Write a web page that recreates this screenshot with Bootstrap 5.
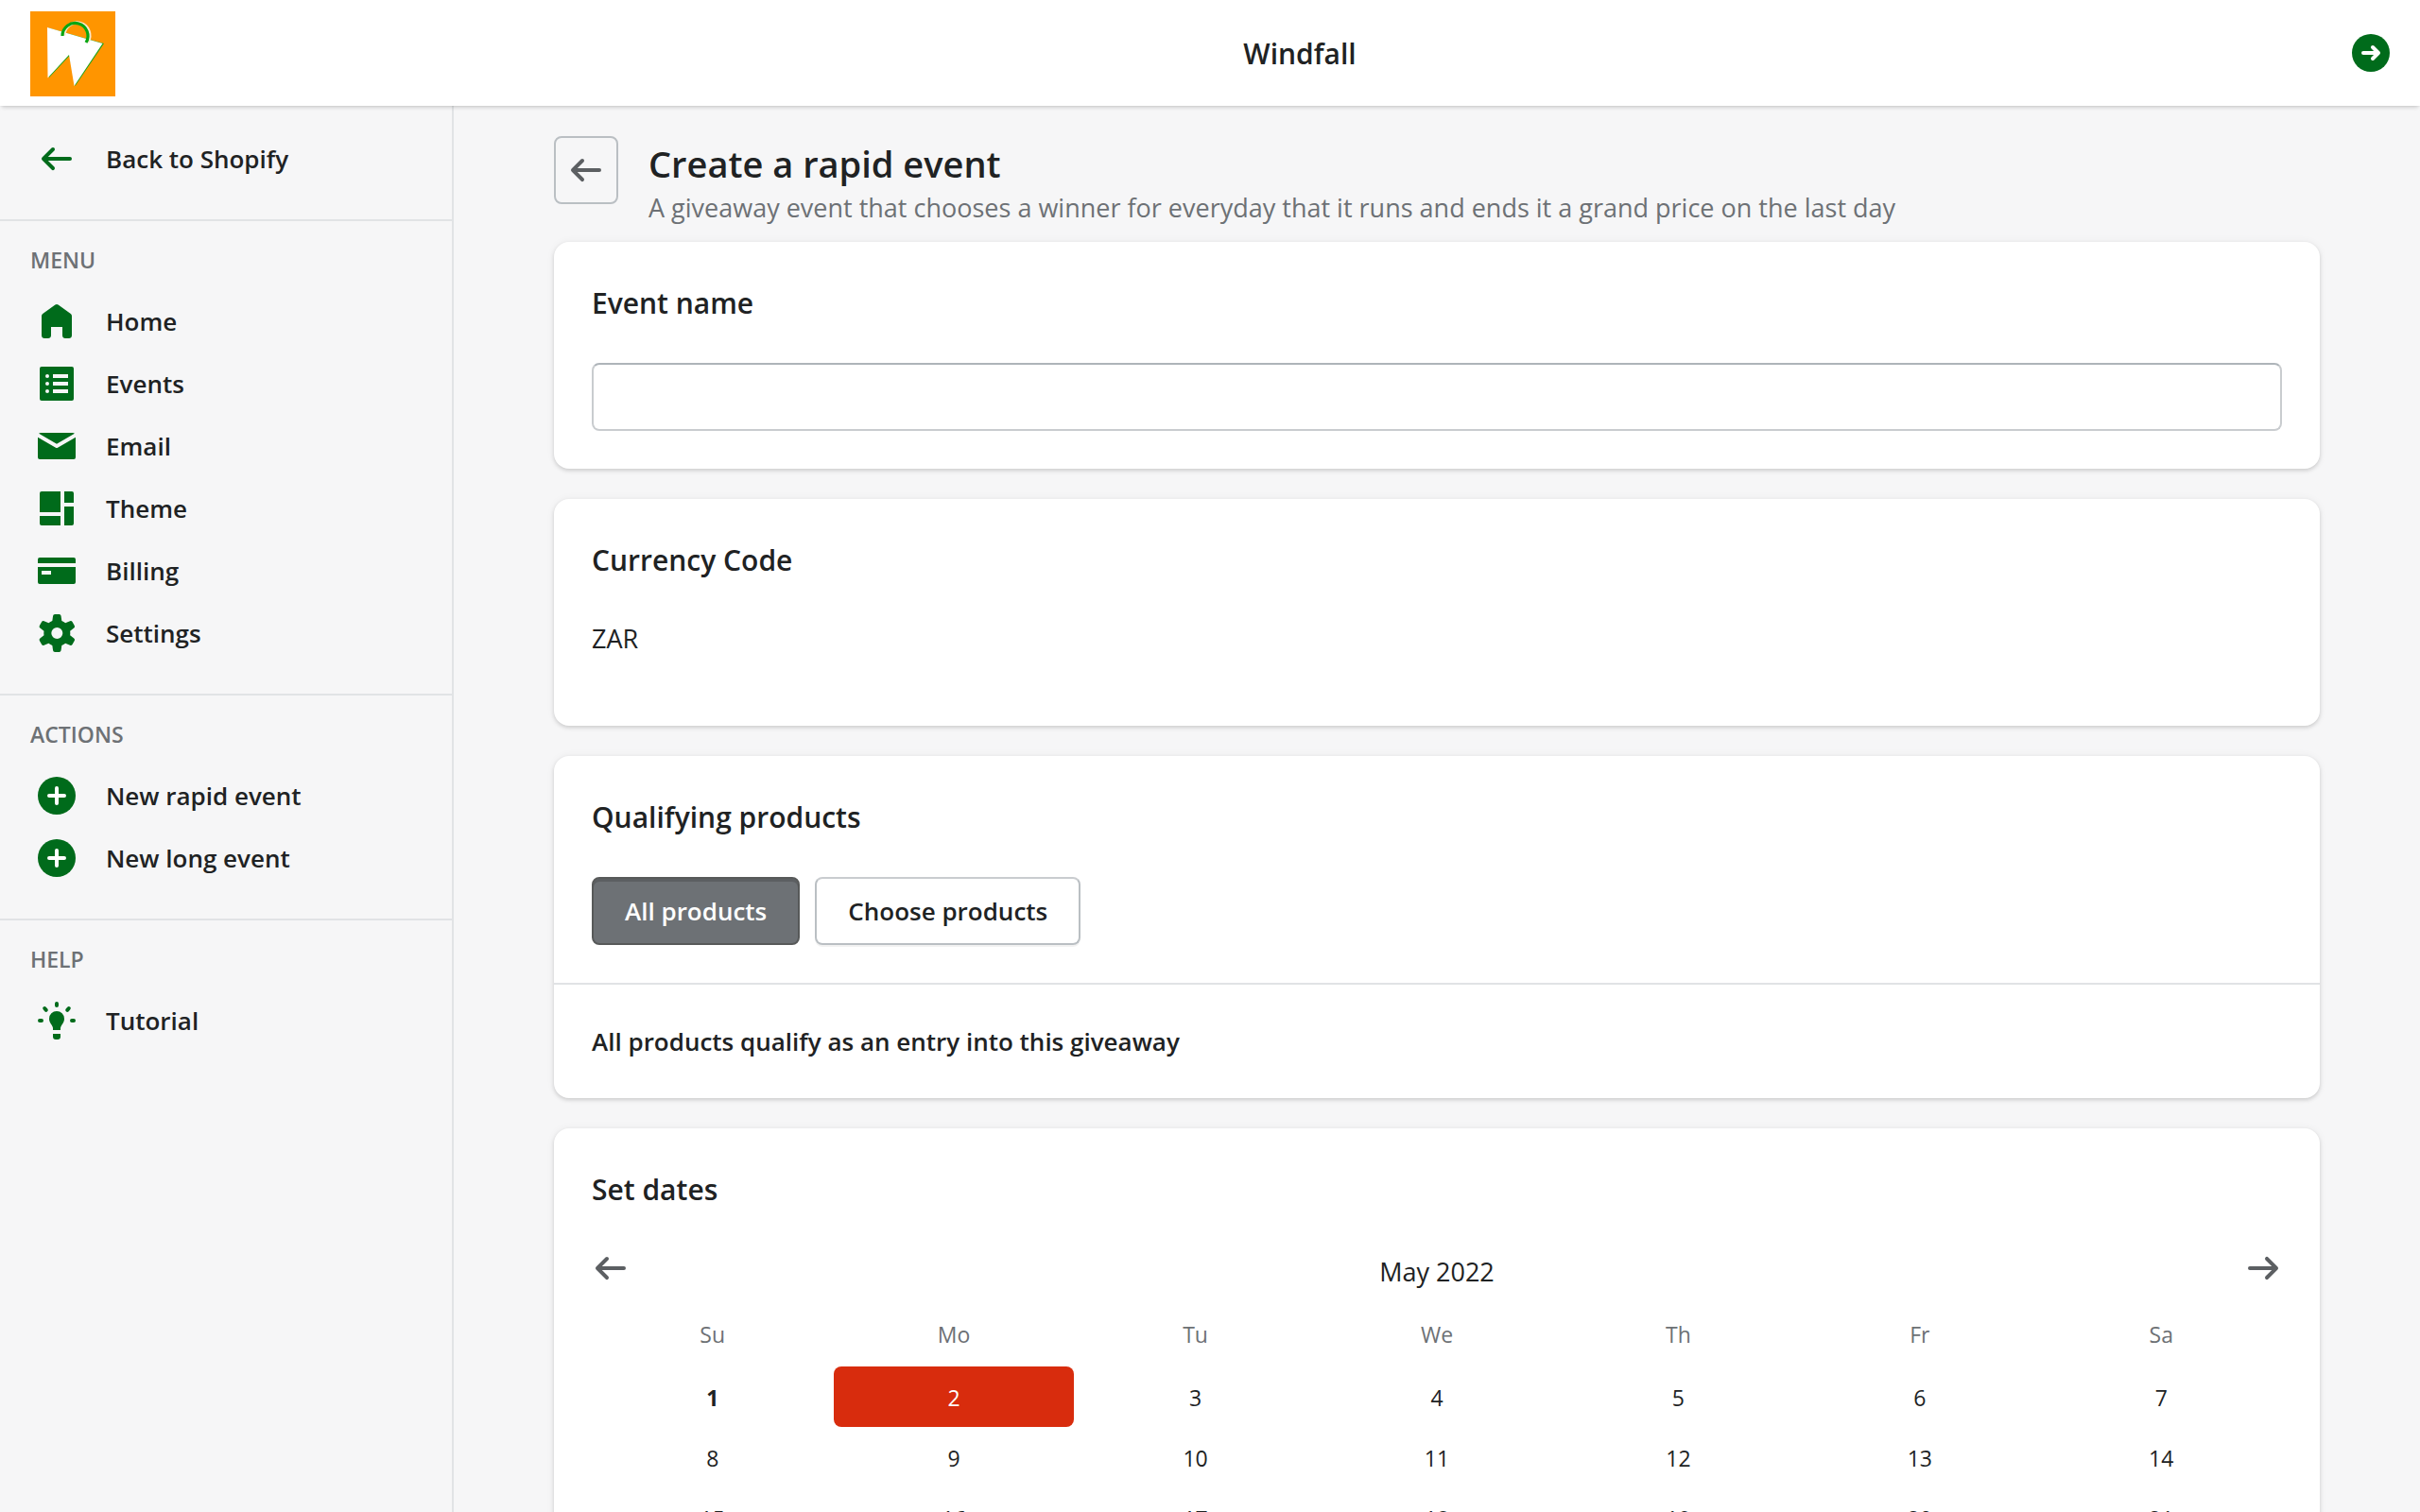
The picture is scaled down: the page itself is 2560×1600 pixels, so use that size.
<!DOCTYPE html>
<html lang="en">
<head>
<meta charset="utf-8">
<meta name="viewport" content="width=device-width, initial-scale=1">
<title>Windfall</title>
<link href="https://cdn.jsdelivr.net/npm/bootstrap@5.3.0/dist/css/bootstrap.min.css" rel="stylesheet">
<style>
:root{--ink:#202223;--subdued:#6d7175;--brand:#006b1b;--line:#e1e3e5;--icon:#5c5f62;--surface:#f6f6f7}
body{font-family:"Open Sans","Noto Sans",sans-serif;font-size:27px;line-height:40px;color:var(--ink);background:var(--surface)}
.ico{width:40px;height:40px;flex:none;display:block;fill:currentColor}
.stroked{fill:none;stroke:currentColor;stroke-width:2;stroke-linecap:round}
.topbar{height:112px;padding:0 32px;flex:none;box-shadow:0 4px 4px -2px rgba(0,0,0,.15),0 0 2px rgba(0,0,0,.1);z-index:2}
.topbar-logo{width:230px;padding-top:2px}
.topbar-logo svg{display:block;width:90px;height:90px}
.brand-name{font-size:30px;padding-top:2px}
.text-brand{color:var(--brand)}
.sidebar{width:480px;flex:none;border-right:2px solid var(--line)}
.side-section{padding-bottom:31px;border-bottom:2px solid var(--line)}
.side-section:first-child{padding-top:23px}
.side-section:last-child{border-bottom:0}
.side-title{font-size:23px;line-height:40px;color:var(--subdued);padding:21px 32px 12px;margin:0;font-weight:600}
.side-link{height:66px;padding:0 40px;gap:32px;color:var(--ink);font-size:26px;font-weight:600}
.side-link .ico{color:var(--brand)}
.side-link:hover{background:#edeeef}
.page-main{padding:32px 64px;scrollbar-width:none}
.page-main::-webkit-scrollbar{display:none}
.page-col{max-width:1868px}
.page-head{gap:32px;margin-bottom:16px}
.back-btn{width:68px;height:72px;border:2px solid #babfc3;border-radius:8px;color:var(--icon)}
.page-title{font-size:38px;line-height:54px;padding-top:2px}
.subdued{color:var(--subdued)}
.panel{border:0;border-radius:16px;margin-bottom:32px;box-shadow:0 0 10px rgba(23,24,24,.05),0 2px 4px rgba(0,0,0,.15)}
.panel-part{padding:40px}
.panel-part + .panel-part{border-top:2px solid var(--line)}
.panel-title{font-size:30px;line-height:50px;margin:0 0 38px;font-weight:600;display:block}
.panel-note{font-size:26px;font-weight:600}
.text-box{height:72px;border:2px solid #c9cccf;border-top-color:#aeb4b9;border-radius:8px;font-size:27px}
.currency{min-height:72px}
.choice{height:72px;border:2px solid #babfc3;border-radius:8px;font-size:26px;font-weight:600;padding:0 33px;color:var(--ink);background:#fff;border-top-color:#c9cccf;box-shadow:0 2px 0 rgba(0,0,0,.05)}
.choice.picked{background:#6d7175;border-color:#575959;color:#fff;box-shadow:inset 0 3px 0 #5c5f62}
.icon-btn{color:var(--icon)}
.calendar{table-layout:fixed;margin-top:12px;font-size:23px}
.calendar th{height:68px;padding:0;font-weight:400;color:var(--subdued)}
.calendar td{padding:0 1px}
.day{height:64px;padding:2px 0 0;border-radius:8px;color:var(--ink)}
.day.today{font-weight:700}
.day.chosen{background:#d82c0d;color:#fff}
</style>
</head>
<body class="vh-100 d-flex flex-column overflow-hidden">
<header class="topbar bg-white d-flex align-items-center position-relative">
  <a class="topbar-logo" href="#" aria-label="Windfall home">
    <svg viewBox="0 0 90 90" aria-hidden="true">
      <rect width="90" height="90" fill="#ff9500"/>
      <path d="M19 17.500l59 16.500-30.500 45-6-32-21.500 23z" fill="#1da31a"/>
      <path d="M18 17l58.500 17L46.500 79 41 46 18.500 70.500z" fill="#fff"/>
      <path d="M36 25.500A13.500 13.500 0 1 1 61 32.500" fill="none" stroke="#fde8cc" stroke-width="3"/>
      <path d="M34 26A13.500 13.500 0 1 1 59 33" fill="none" stroke="#08a612" stroke-width="3.200"/>
    </svg>
  </a>
  <div class="brand-name flex-fill text-center fw-semibold">Windfall</div>
  <button type="button" class="btn p-0 border-0 text-brand" aria-label="Log out">
    <svg class="ico" viewBox="0 0 20 20"><circle cx="10" cy="10" r="10"/><path d="M6 10h8M11 7l3 3-3 3" fill="none" stroke="#fff" stroke-width="2" stroke-linecap="round" stroke-linejoin="round"/></svg>
  </button>
</header>
<div class="d-flex flex-fill overflow-hidden">
  <nav class="sidebar" aria-label="Main">
    <div class="side-section">
      <a class="side-link d-flex align-items-center text-decoration-none" href="#"><svg class="ico" viewBox="0 0 20 20"><path d="M17 9H5.414l3.293-3.293a.999.999 0 1 0-1.414-1.414l-5 5a.999.999 0 0 0 0 1.414l5 5a.997.997 0 0 0 1.414 0 .999.999 0 0 0 0-1.414L5.414 11H17a1 1 0 1 0 0-2z"/></svg>Back to Shopify</a>
    </div>
    <div class="side-section">
      <h2 class="side-title">MENU</h2>
      <a class="side-link d-flex align-items-center text-decoration-none" href="#"><svg class="ico" viewBox="0 0 20 20"><path d="M18 7.261V17.500c0 .841-.672 1.500-1.500 1.500h-2c-.828 0-1.500-.659-1.500-1.500V13H7v4.477C7 18.318 6.328 19 5.500 19h-2c-.828 0-1.500-.682-1.500-1.523V7.261a1.500 1.500 0 0 1 .615-1.210l6.590-4.820a1.481 1.481 0 0 1 1.590 0l6.590 4.820A1.500 1.500 0 0 1 18 7.260z"/></svg>Home</a>
      <a class="side-link d-flex align-items-center text-decoration-none" href="#"><svg class="ico" viewBox="0 0 20 20"><path fill-rule="evenodd" d="M2 1h16a1 1 0 0 1 1 1v16a1 1 0 0 1-1 1H2a1 1 0 0 1-1-1V2a1 1 0 0 1 1-1zm6 4v2h8V5zm0 4v2h8V9zm0 4v2h8v-2zM5 5a1 1 0 1 0 0 2 1 1 0 0 0 0-2zm0 4a1 1 0 1 0 0 2 1 1 0 0 0 0-2zm0 4a1 1 0 1 0 0 2 1 1 0 0 0 0-2z"/></svg>Events</a>
      <a class="side-link d-flex align-items-center text-decoration-none" href="#"><svg class="ico" viewBox="0 0 20 20"><path d="M0 5.324V16a1 1 0 0 0 1 1h18a1 1 0 0 0 1-1V5.324l-9.496 5.540a1 1 0 0 1-1.008 0L0 5.324z"/><path d="M19.443 3.334A1.494 1.494 0 0 0 18.500 3h-17a1.490 1.490 0 0 0-.943.334L10 8.842l9.443-5.508z"/></svg>Email</a>
      <a class="side-link d-flex align-items-center text-decoration-none" href="#"><svg class="ico" viewBox="0 0 20 20"><path d="M2 1h10v11H1V2a1 1 0 0 1 1-1zM14 1h4a1 1 0 0 1 1 1v5h-5zM1 14h11v5H2a1 1 0 0 1-1-1zM14 9h5v9a1 1 0 0 1-1 1h-4z"/></svg>Theme</a>
      <a class="side-link d-flex align-items-center text-decoration-none" href="#"><svg class="ico" viewBox="0 0 20 20"><path fill-rule="evenodd" d="M1 3h18a1 1 0 0 1 1 1v2H0V4a1 1 0 0 1 1-1zM0 8h20v8a1 1 0 0 1-1 1H1a1 1 0 0 1-1-1zm2 2v2h5v-2z"/></svg>Billing</a>
      <a class="side-link d-flex align-items-center text-decoration-none" href="#"><svg class="ico" viewBox="0 0 20 20"><path fill-rule="evenodd" d="M9.027 0a1 1 0 0 0-.990.859l-.370 2.598A6.993 6.993 0 0 0 5.742 4.570l-2.437-.980a1 1 0 0 0-1.239.428L.934 5.981a1 1 0 0 0 .248 1.287l2.066 1.621a7.060 7.060 0 0 0 0 2.222l-2.066 1.621a1 1 0 0 0-.248 1.287l1.132 1.962a1 1 0 0 0 1.239.428l2.438-.979a6.995 6.995 0 0 0 1.923 1.113l.372 2.598a1 1 0 0 0 .990.859h2.265a1 1 0 0 0 .990-.859l.371-2.598a6.995 6.995 0 0 0 1.924-1.112l2.438.978a1 1 0 0 0 1.238-.428l1.133-1.962a1 1 0 0 0-.249-1.287l-2.065-1.621a7.063 7.063 0 0 0 0-2.222l2.065-1.621a1 1 0 0 0 .249-1.287l-1.133-1.962a1 1 0 0 0-1.239-.428l-2.437.979a6.994 6.994 0 0 0-1.924-1.113L12.283.860a1 1 0 0 0-.990-.859H9.027zm1.133 13a3 3 0 1 0 0-6 3 3 0 0 0 0 6z"/></svg>Settings</a>
    </div>
    <div class="side-section">
      <h2 class="side-title">ACTIONS</h2>
      <a class="side-link d-flex align-items-center text-decoration-none" href="#"><svg class="ico" viewBox="0 0 20 20"><circle cx="10" cy="10" r="10"/><path d="M6 10h8M10 6v8" stroke="#fff" stroke-width="2" stroke-linecap="round"/></svg>New rapid event</a>
      <a class="side-link d-flex align-items-center text-decoration-none" href="#"><svg class="ico" viewBox="0 0 20 20"><circle cx="10" cy="10" r="10"/><path d="M6 10h8M10 6v8" stroke="#fff" stroke-width="2" stroke-linecap="round"/></svg>New long event</a>
    </div>
    <div class="side-section">
      <h2 class="side-title">HELP</h2>
      <a class="side-link d-flex align-items-center text-decoration-none" href="#"><svg class="ico" viewBox="0 0 20 20"><path class="stroked" d="M10 1v1M1 10h1M18 10h1M3.600 3.500l.800.900M16.400 3.500l-.800.900"/><path d="M10 5a4 4 0 0 1 4 4c0 2.500-2 3.500-2 5v1H8v-1c0-1.500-2-2.500-2-5a4 4 0 0 1 4-4zM8 17h4v1.500a1.500 1.500 0 0 1-1.500 1.500h-1A1.500 1.500 0 0 1 8 18.500z"/></svg>Tutorial</a>
    </div>
  </nav>
  <main class="page-main flex-fill overflow-auto">
    <div class="page-col mx-auto">
      <div class="page-head d-flex align-items-start">
        <button type="button" class="btn back-btn p-0 d-flex align-items-center justify-content-center" aria-label="Back"><svg class="ico" viewBox="0 0 20 20"><path d="M17 9H5.414l3.293-3.293a.999.999 0 1 0-1.414-1.414l-5 5a.999.999 0 0 0 0 1.414l5 5a.997.997 0 0 0 1.414 0 .999.999 0 0 0 0-1.414L5.414 11H17a1 1 0 1 0 0-2z"/></svg></button>
        <div>
          <h1 class="page-title fw-semibold mb-0">Create a rapid event</h1>
          <p class="subdued mb-0">A giveaway event that chooses a winner for everyday that it runs and ends it a grand price on the last day</p>
        </div>
      </div>

      <section class="card panel">
        <div class="panel-part">
          <label class="panel-title" for="event-name">Event name</label>
          <input type="text" class="form-control text-box" id="event-name">
        </div>
      </section>

      <section class="card panel">
        <div class="panel-part">
          <h2 class="panel-title">Currency Code</h2>
          <div class="currency">ZAR</div>
        </div>
      </section>

      <section class="card panel">
        <div class="panel-part">
          <h2 class="panel-title">Qualifying products</h2>
          <div class="d-flex gap-3">
            <button type="button" class="btn choice picked" aria-pressed="true">All products</button>
            <button type="button" class="btn choice" aria-pressed="false">Choose products</button>
          </div>
        </div>
        <div class="panel-part panel-note">All products qualify as an entry into this giveaway</div>
      </section>

      <section class="card panel">
        <div class="panel-part">
          <h2 class="panel-title">Set dates</h2>
          <div class="d-flex align-items-start justify-content-between">
            <button type="button" class="btn icon-btn p-0 border-0" aria-label="Previous month"><svg class="ico" viewBox="0 0 20 20"><path d="M17 9H5.414l3.293-3.293a.999.999 0 1 0-1.414-1.414l-5 5a.999.999 0 0 0 0 1.414l5 5a.997.997 0 0 0 1.414 0 .999.999 0 0 0 0-1.414L5.414 11H17a1 1 0 1 0 0-2z"/></svg></button>
            <div class="pt-1" id="month-name">May 2022</div>
            <button type="button" class="btn icon-btn p-0 border-0" aria-label="Next month"><svg class="ico" viewBox="0 0 20 20"><path d="M3 11h11.586l-3.293 3.293a.999.999 0 1 0 1.414 1.414l5-5a.999.999 0 0 0 0-1.414l-5-5a.997.997 0 0 0-1.414 0 .999.999 0 0 0 0 1.414L14.586 9H3a1 1 0 1 0 0 2z"/></svg></button>
          </div>
          <table class="calendar w-100 text-center" aria-labelledby="month-name">
            <thead><tr><th scope="col">Su</th><th scope="col">Mo</th><th scope="col">Tu</th><th scope="col">We</th><th scope="col">Th</th><th scope="col">Fr</th><th scope="col">Sa</th></tr></thead>
            <tbody id="weeks"></tbody>
          </table>
        </div>
      </section>
    </div>
  </main>
</div>
<script src="https://cdn.jsdelivr.net/npm/bootstrap@5.3.0/dist/js/bootstrap.bundle.min.js"></script>
<script>
// May 2022 starts on a Sunday, so day 1 fills the first column.
const today = 1, chosen = 2, daysInMonth = 31;
const weeks = document.getElementById('weeks');
for (let first = 1; first <= daysInMonth; first += 7) {
  const row = weeks.insertRow();
  for (let d = first; d < first + 7; d++) {
    const cell = row.insertCell();
    if (d > daysInMonth) continue;
    const b = document.createElement('button');
    b.type = 'button';
    b.className = 'day w-100 border-0 bg-transparent d-block';
    if (d === today) b.classList.add('today');
    if (d === chosen) { b.classList.add('chosen'); b.classList.remove('bg-transparent'); }
    b.textContent = d;
    cell.append(b);
  }
}
</script>
</body>
</html>
